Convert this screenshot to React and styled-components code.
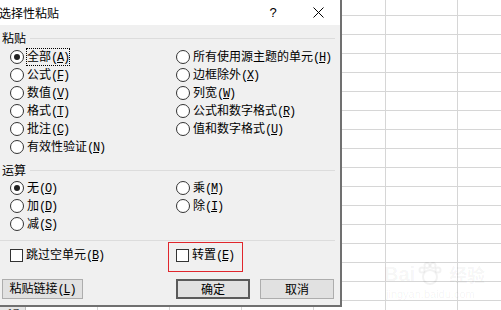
import React from "react";
import styled, { createGlobalStyle } from "styled-components";

const Global = createGlobalStyle`
  html, body { margin: 0; padding: 0; background: #fff; }
  body { font-family: "Noto Sans CJK SC", "Noto Sans", sans-serif; }
`;

const CJK = `"Noto Sans CJK SC", "Noto Sans", sans-serif`;

const Page = styled.div`
  position: relative;
  width: 501px;
  height: 310px;
  overflow: hidden;
  background-color: #fff;
  background-image:
    linear-gradient(to right, #d6d6d6 1px, transparent 1px),
    linear-gradient(to bottom, #d6d6d6 1px, transparent 1px);
  background-size: 72px 100%, 100% 19px;
  background-position: 25px 0, 0 15px;
  font-family: ${CJK};
  font-size: 12px;
  color: #000;
`;

const Dialog = styled.div`
  box-sizing: border-box;
  width: 342px;
  height: 307px;
  background: #f0f0f0;
  border-right: 2px solid #707070;
  border-bottom: 2px solid #707070;
  display: flex;
  flex-direction: column;
`;

const TitleBar = styled.div`
  height: 25px;
  background: #fff;
  display: flex;
  align-items: center;
  padding-right: 11px;
`;

const Title = styled.div`
  font-size: 12px;
  line-height: 14px;
  margin-left: -1px;
  margin-right: auto;
`;

const TitleButton = styled.div`
  width: 22px;
  height: 25px;
  display: flex;
  align-items: center;
  justify-content: center;
  margin-left: ${(p) => p.$ml || 0}px;
  font-family: "Liberation Sans", sans-serif;
  font-size: 13px;
`;

const Body = styled.div`
  display: flex;
  flex-direction: column;
`;

const GroupLabel = styled.div`
  display: flex;
  align-items: center;
  height: 16px;
  margin-top: ${(p) => p.$mt}px;
  padding-left: 2px;
  padding-right: 5px;
  gap: 4px;
  line-height: 14px;
  &::after {
    content: "";
    flex: 1;
    height: 1px;
    background: #dcdcdc;
  }
`;

const OptionGrid = styled.div`
  display: grid;
  grid-template-columns: 166px 1fr;
  grid-auto-rows: 18px;
  padding-left: 10px;
  margin-top: ${(p) => p.$mt}px;
`;

const Cell = styled.div`
  position: relative;
  display: flex;
  align-items: center;
  ${(p) =>
    p.$marked &&
    `
    &::before {
      content: "";
      position: absolute;
      left: -8px;
      top: -4px;
      width: 75px;
      height: 30px;
      box-sizing: border-box;
      border: 1px solid #e0262c;
    }
  `}
`;

const Radio = styled.span`
  box-sizing: border-box;
  width: 14px;
  height: 14px;
  border-radius: 50%;
  border: 1px solid #333;
  background: #fff;
  display: flex;
  align-items: center;
  justify-content: center;
  flex: none;
  &::after {
    content: "";
    width: 6px;
    height: 6px;
    border-radius: 50%;
    background: ${(p) => (p.$checked ? "#222" : "transparent")};
  }
`;

const Check = styled.span`
  box-sizing: border-box;
  width: 13px;
  height: 13px;
  border: 1px solid #333;
  background: #fff;
  flex: none;
`;

const Text = styled.span`
  margin-left: 2px;
  border: 1px dotted ${(p) => (p.$focus ? "#000" : "transparent")};
  line-height: 14px;
  white-space: nowrap;
`;

const Paren = styled.span`
  font-family: "Liberation Mono", monospace;
  font-size: 12px;
  letter-spacing: -1.2px;
  u {
    text-underline-offset: 1px;
  }
`;

const Separator = styled.div`
  height: 1px;
  background: #dcdcdc;
  margin: 7px 5px 0 0;
`;

const ButtonRow = styled.div`
  display: grid;
  grid-template-columns: 174px 84px 74px;
  padding-left: 2px;
  margin-top: 15px;
`;

const Button = styled.button`
  box-sizing: border-box;
  width: ${(p) => p.$w}px;
  height: 20px;
  padding: 0;
  margin: 0;
  background: #e1e1e1;
  border: ${(p) => (p.$default ? "2px solid #5a5a5a" : "1px solid #adadad")};
  font-family: ${CJK};
  font-size: 12px;
  color: #000;
  line-height: 14px;
`;

const RowHeader = styled.div`
  box-sizing: border-box;
  width: 26px;
  height: 3px;
  overflow: hidden;
  background: #e6e6e6;
  border-right: 1px solid #bdbdbd;
  font-family: "Liberation Sans", sans-serif;
  font-size: 11px;
  line-height: 11px;
  padding-left: 7px;
  padding-top: 1px;
  color: #444;
`;

const Watermark = styled.div`
  position: absolute;
  left: 384px;
  top: 262px;
  color: rgba(0, 0, 0, 0.05);
  font-family: "Liberation Sans", sans-serif;
  line-height: 1;
  pointer-events: none;
`;

const WmTop = styled.div`
  display: flex;
  align-items: center;
  gap: 2px;
  font-size: 20px;
  font-weight: bold;
`;

const WmCjk = styled.span`
  font-family: ${CJK};
  font-size: 18px;
  margin-left: 4px;
`;

const WmUrl = styled.div`
  font-size: 11px;
  margin-top: 3px;
  margin-left: 2px;
`;

const Key = ({ k }) => (
  <Paren>
    (<u>{k}</u>)
  </Paren>
);

const Option = ({ label, k, checked, focus, type = "radio", marked }) => (
  <Cell $marked={marked}>
    {type === "radio" ? <Radio $checked={checked} /> : <Check />}
    <Text $focus={focus}>
      {label}
      <Key k={k} />
    </Text>
  </Cell>
);

const pasteRows = [
  [{ label: "全部", k: "A", checked: true, focus: true }, { label: "所有使用源主题的单元", k: "H" }],
  [{ label: "公式", k: "F" }, { label: "边框除外", k: "X" }],
  [{ label: "数值", k: "V" }, { label: "列宽", k: "W" }],
  [{ label: "格式", k: "T" }, { label: "公式和数字格式", k: "R" }],
  [{ label: "批注", k: "C" }, { label: "值和数字格式", k: "U" }],
  [{ label: "有效性验证", k: "N" }, null],
];

const opRows = [
  [{ label: "无", k: "O", checked: true }, { label: "乘", k: "M" }],
  [{ label: "加", k: "D" }, { label: "除", k: "I" }],
  [{ label: "减", k: "S" }, null],
];

const renderRows = (rows) =>
  rows.flatMap((row, i) =>
    row.map((o, j) => (o ? <Option key={`${i}-${j}`} {...o} /> : <Cell key={`${i}-${j}`} />))
  );

export default function App() {
  return (
    <Page>
      <Global />
      <Dialog>
        <TitleBar>
          <Title>选择性粘贴</Title>
          <TitleButton>?</TitleButton>
          <TitleButton $ml={23}>
            <svg width="11" height="11" viewBox="0 0 11 11">
              <path d="M0.5 0.5 L10.5 10.5 M10.5 0.5 L0.5 10.5" stroke="#000" strokeWidth="1" fill="none" />
            </svg>
          </TitleButton>
        </TitleBar>
        <Body>
          <GroupLabel $mt={5}>粘贴</GroupLabel>
          <OptionGrid $mt={2}>{renderRows(pasteRows)}</OptionGrid>
          <GroupLabel $mt={6}>运算</GroupLabel>
          <OptionGrid $mt={1}>{renderRows(opRows)}</OptionGrid>
          <Separator />
          <OptionGrid $mt={5}>
            <Option type="check" label="跳过空单元" k="B" />
            <Option type="check" label="转置" k="E" marked />
          </OptionGrid>
          <ButtonRow>
            <Button $w={81}>
              粘贴链接<Key k="L" />
            </Button>
            <Button $w={74} $default>
              确定
            </Button>
            <Button $w={74}>取消</Button>
          </ButtonRow>
        </Body>
      </Dialog>
      <RowHeader>17</RowHeader>
      <Watermark>
        <WmTop>
          Bai
          <svg width="26" height="24" viewBox="0 0 26 24">
            <g fill="none" stroke="currentColor" strokeWidth="2">
              <circle cx="13" cy="15" r="7" />
              <circle cx="5" cy="8" r="2.5" />
              <circle cx="10" cy="3.5" r="2.5" />
              <circle cx="16" cy="3.5" r="2.5" />
              <circle cx="21" cy="8" r="2.5" />
            </g>
          </svg>
          <WmCjk>经验</WmCjk>
        </WmTop>
        <WmUrl>jingyan.baidu.com</WmUrl>
      </Watermark>
    </Page>
  );
}
